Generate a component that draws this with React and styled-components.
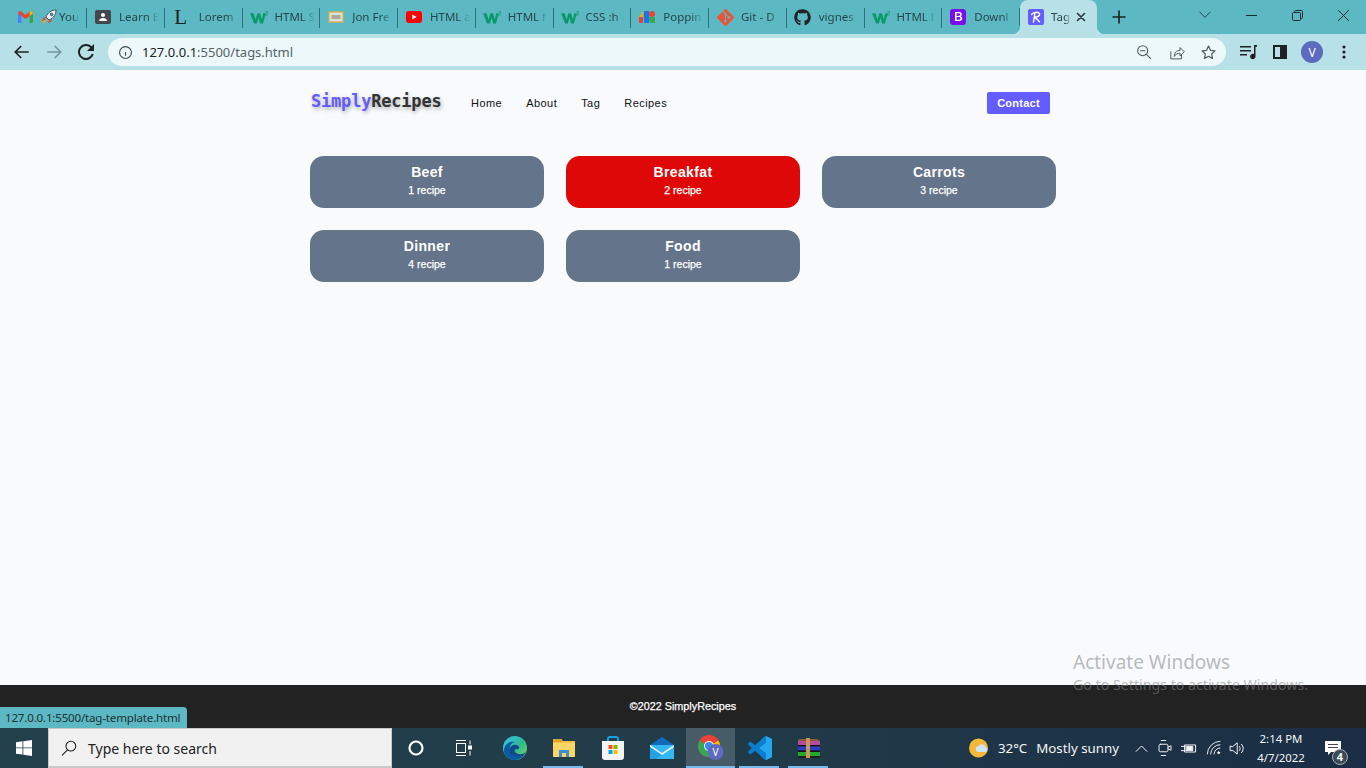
import React from 'react';
import styled, { createGlobalStyle } from 'styled-components';
import { FaGithub } from 'react-icons/fa';

const GlobalStyle = createGlobalStyle`
  html, body { margin: 0; padding: 0; height: 100%; overflow: hidden; }
  * { box-sizing: border-box; }
  body { font-family: "Liberation Sans", Arial, sans-serif; }
`;

const UI_FONT = `"Noto Sans", "Open Sans", sans-serif`;

const Screen = styled.div`
  position: relative;
  width: 1366px;
  height: 768px;
  display: flex;
  flex-direction: column;
  overflow: hidden;
  background: #f8fafc;
`;

/* ---------- browser chrome ---------- */
const TabStrip = styled.div`
  height: 34px;
  flex: none;
  display: flex;
  align-items: stretch;
  background: #5cb8c2;
  padding-left: 9px;
  font-family: ${UI_FONT};
`;
const Tab = styled.div`
  width: ${p => p.$w || 77.75}px;
  flex: none;
  display: flex;
  align-items: center;
  padding-left: ${p => p.$pad ?? 8}px;
  position: relative;
  &::after {
    content: '';
    display: ${p => (p.$noSep ? 'none' : 'block')};
    position: absolute;
    right: 0;
    top: 8px;
    bottom: 6px;
    width: 1px;
    background: #2f6f77;
  }
`;
const ActiveTab = styled.div`
  width: 77px;
  flex: none;
  display: flex;
  align-items: center;
  padding-left: 8px;
  position: relative;
  background: #b7e1e6;
  border-radius: 8px 8px 0 0;
  &::before, &::after {
    content: '';
    position: absolute;
    bottom: 0;
    width: 8px;
    height: 8px;
  }
  &::before { left: -8px; background: radial-gradient(circle at 0 0, #5cb8c2 8px, #b7e1e6 8.5px); }
  &::after { right: -8px; background: radial-gradient(circle at 100% 0, #5cb8c2 8px, #b7e1e6 8.5px); }
`;
const TabIcon = styled.span`
  width: 16px;
  height: 16px;
  flex: none;
  display: flex;
  align-items: center;
  justify-content: center;
  margin-right: ${p => p.$gap ?? 8}px;
  svg { display: block; flex: none; }
`;
const TabTitle = styled.span`
  font-size: 11.5px;
  line-height: 16px;
  color: #27474c;
  white-space: nowrap;
  overflow: hidden;
  width: ${p => p.$w || 40}px;
  -webkit-mask-image: linear-gradient(90deg, #000 70%, transparent);
  mask-image: linear-gradient(90deg, #000 70%, transparent);
`;
const TabClose = styled.span`
  display: flex;
  margin-left: 3px;
  color: #26383b;
`;
const SerifL = styled.span`
  font-family: "Liberation Serif", serif;
  font-size: 21px;
  line-height: 16px;
  color: #222;
`;
const WindowControls = styled.div`
  margin-left: auto;
  display: flex;
  align-items: center;
  color: #1d2b2e;
`;
const NewTab = styled.div`
  width: 28px;
  display: flex;
  align-items: center;
  justify-content: center;
  margin-left: 8px;
  color: #1b2527;
`;
const WinButton = styled.div`
  width: 46px;
  height: 34px;
  display: flex;
  align-items: center;
  justify-content: center;
  position: relative;
  top: -2px;
`;

const Toolbar = styled.div`
  height: 36px;
  flex: none;
  display: flex;
  align-items: center;
  background: #b7e1e6;
  padding: 0 6px;
`;
const NavButton = styled.button`
  width: 32px;
  height: 32px;
  flex: none;
  border: 0;
  padding: 0;
  background: none;
  display: flex;
  align-items: center;
  justify-content: center;
  color: ${p => (p.$muted ? '#75969b' : '#202124')};
`;
const IconAction = styled.span`
  width: 32px;
  height: 32px;
  flex: none;
  display: flex;
  align-items: center;
  justify-content: center;
`;
const AddressBar = styled.div`
  flex: 1;
  height: 28px;
  margin: 0 6px;
  border-radius: 14px;
  background: #ecf8f9;
  display: flex;
  align-items: center;
  padding: 0 2px 0 10px;
  font-family: ${UI_FONT};
`;
const InfoIcon = styled.span`
  display: flex;
  color: #3f4a4d;
`;
const Url = styled.span`
  font-size: 13px;
  margin-left: 9px;
`;
const UrlHost = styled.span`
  color: #202124;
`;
const UrlPath = styled.span`
  color: #556468;
`;
const AddressActions = styled.div`
  margin-left: auto;
  display: flex;
  color: #4d5a5d;
`;
const Avatar = styled.span`
  width: 22px;
  height: 22px;
  border-radius: 50%;
  background: #5c6bc0;
  color: #fff;
  font: 12px ${UI_FONT};
  display: flex;
  align-items: center;
  justify-content: center;
`;

/* ---------- page ---------- */
const Main = styled.main`
  flex: 1;
  background: #f8fafc;
  display: flex;
  flex-direction: column;
  align-items: center;
`;
const Container = styled.div`
  width: 746px;
`;
const Navbar = styled.nav`
  height: 66px;
  display: flex;
  align-items: center;
  padding: 0 6px 0 1px;
`;
const Brand = styled.div`
  font-family: "DejaVu Sans Mono", "Liberation Mono", monospace;
  font-weight: 700;
  font-size: 17px;
  line-height: 20px;
  letter-spacing: -0.2px;
  color: #333;
  text-shadow: 1px 2px 4px rgba(0, 0, 0, 0.33);
  width: 160px;
  margin-bottom: 4px;
`;
const BrandAccent = styled.span`
  color: #645cff;
`;
const NavLinks = styled.div`
  display: flex;
  gap: 24px;
`;
const NavLink = styled.a`
  font-size: 11px;
  letter-spacing: 0.45px;
  color: #111;
`;
const ContactButton = styled.button`
  margin-left: auto;
  width: 63px;
  height: 22px;
  border: 0;
  padding: 0;
  border-radius: 2px;
  background: #645cff;
  color: #fff;
  font: 700 11px "Liberation Sans", Arial, sans-serif;
  letter-spacing: 0.25px;
`;
const TagGrid = styled.div`
  margin-top: 20px;
  display: grid;
  grid-template-columns: repeat(3, 234px);
  grid-auto-rows: 52px;
  gap: 22px;
`;
const TagCard = styled.a`
  border-radius: 14px;
  background: ${p => (p.$active ? '#df0808' : '#64748b')};
  color: #fff;
  text-align: center;
  padding-top: 7px;
`;
const TagName = styled.div`
  font-size: 14px;
  line-height: 18px;
  font-weight: 700;
  letter-spacing: 0.35px;
`;
const TagCount = styled.div`
  font-size: 10.5px;
  line-height: 18px;
  font-weight: 400;
  -webkit-text-stroke: 0.25px #fff;
`;
const Footer = styled.footer`
  height: 43px;
  flex: none;
  background: #222;
  color: #fff;
  display: flex;
  align-items: center;
  justify-content: center;
  font-size: 10.8px;
  -webkit-text-stroke: 0.25px #fff;
  padding-bottom: 1px;
`;

/* ---------- overlays ---------- */
const StatusBubble = styled.div`
  position: absolute;
  left: 0;
  bottom: 40px;
  width: 187px;
  height: 21px;
  background: #5cb8c2;
  border-top-right-radius: 4px;
  color: #1e3236;
  font: 11.6px/21px ${UI_FONT};
  letter-spacing: -0.2px;
  padding-left: 5px;
  white-space: nowrap;
`;
const Watermark = styled.div`
  position: absolute;
  left: 1073px;
  top: 649px;
  color: rgba(130, 130, 130, 0.55);
  font-family: ${UI_FONT};
  pointer-events: none;
`;
const WatermarkTitle = styled.div`
  font-size: 19px;
  line-height: 26px;
`;
const WatermarkSub = styled.div`
  font-size: 14.2px;
  line-height: 19px;
  white-space: nowrap;
`;

/* ---------- taskbar ---------- */
const Taskbar = styled.div`
  height: 40px;
  flex: none;
  display: flex;
  align-items: stretch;
  background: linear-gradient(90deg, #21404b 0%, #223c49 50%, #1a2d45 100%);
  color: #fff;
  font-family: ${UI_FONT};
`;
const StartButton = styled.div`
  width: 48px;
  flex: none;
  display: flex;
  align-items: center;
  justify-content: center;
`;
const SearchBox = styled.div`
  width: 344px;
  flex: none;
  display: flex;
  align-items: center;
  background: #f1f1f1;
  border: 1px solid #c9c9c9;
  border-bottom-width: 2px;
  padding-left: 11px;
  color: #222;
  font-size: 14px;
`;
const SearchText = styled.span`
  margin-left: 10px;
  padding-top: 1px;
`;
const TaskSlot = styled.div`
  width: ${p => p.$w || 49}px;
  flex: none;
  margin-left: ${p => p.$ml || 0}px;
  display: flex;
  align-items: center;
  justify-content: center;
  position: relative;
  background: ${p => (p.$active ? 'rgba(255,255,255,0.17)' : 'transparent')};
  &::after {
    content: '';
    display: ${p => (p.$open ? 'block' : 'none')};
    position: absolute;
    left: ${p => (p.$active ? 0 : 4)}px;
    right: ${p => (p.$active ? 0 : 5)}px;
    bottom: 0;
    height: 2px;
    background: #76b9ed;
  }
`;
const Tray = styled.div`
  margin-left: auto;
  display: flex;
  align-items: center;
  font-size: 13.3px;
  color: #f4f6f7;
`;
const TrayText = styled.span`
  margin-left: ${p => p.$ml || 0}px;
  white-space: nowrap;
`;
const TrayIcon = styled.span`
  width: 22px;
  display: flex;
  justify-content: center;
  margin-left: ${p => p.$ml || 0}px;
`;
const Clock = styled.div`
  width: 64px;
  margin-left: 2px;
  text-align: center;
  font-size: 11.4px;
  line-height: 19px;
`;
const NotifyButton = styled.div`
  position: relative;
  width: 30px;
  margin-left: 5px;
  margin-right: 18px;
  display: flex;
  justify-content: center;
`;
const NotifyBadge = styled.span`
  position: absolute;
  left: 14px;
  top: 8px;
  width: 16px;
  height: 16px;
  border-radius: 50%;
  border: 1px solid #aaa;
  background: #3a4a56;
  font-size: 11px;
  font-weight: 700;
  line-height: 14px;
  text-align: center;
`;

/* ---------- drawn icons ---------- */
const Stroke = ({ s = 16, w = 2, children, vb = 24 }) => (
  <svg width={s} height={s} viewBox={`0 0 ${vb} ${vb}`} fill="none" stroke="currentColor" strokeWidth={w} strokeLinecap="round" strokeLinejoin="round">{children}</svg>
);

const Gmail = () => (
  <svg width="15" height="12" viewBox="0 0 15 12">
    <path d="M0 2v9a1 1 0 0 0 1 1h2.4V5z" fill="#4285f4" />
    <path d="M15 2v9a1 1 0 0 1-1 1h-2.4V5z" fill="#34a853" />
    <path d="M0 2.2C0 .6 1.7-.4 3 .5l4.5 3.4L12 .5c1.3-.9 3 .1 3 1.7L11.6 5 7.5 8 3.4 5z" fill="#ea4335" />
    <path d="M11.6 1 12 .5c1.3-.9 3 .1 3 1.7L11.6 5z" fill="#fbbc04" />
  </svg>
);
const Rocket = () => (
  <svg width="16" height="16" viewBox="0 0 16 16">
    <path d="M5 8 2 9l-1 3 3-1z" fill="#d9502c" />
    <path d="M8 11l-1 3 3-1 1-3z" fill="#d9502c" />
    <path d="M5 8C7 3 11 1 15 1c0 4-2 8-7 10z" fill="#eef1f3" stroke="#33383c" strokeWidth=".8" />
    <circle cx="10.6" cy="5.4" r="1.4" fill="#4a90c8" stroke="#33383c" strokeWidth=".6" />
    <path d="M2 14l3-3" stroke="#f2a33a" strokeWidth="2" />
  </svg>
);
const Classroom = () => (
  <svg width="16" height="16" viewBox="0 0 16 16">
    <rect width="16" height="14" y="1" rx="2" fill="#44474c" />
    <circle cx="8" cy="6" r="2" fill="#fff" />
    <path d="M4 12c0-2 2-3 4-3s4 1 4 3z" fill="#fff" />
  </svg>
);
const W3 = () => (
  <svg width="18" height="13" viewBox="0 0 17 12">
    <path d="M0 2h3.4l1.8 6 1.8-6h2.4l1.8 6 1.3-6H15l-2.8 9.6H9.6L8.1 6.2 6.5 11.6H3.9z" fill="#0a9a6a" />
    <path d="M14.2 0h2.3v.8l-.9 1c.6.1 1 .4 1 1 0 .7-.6 1.1-1.3 1.1-.5 0-.9-.1-1.2-.3" fill="none" stroke="#0a9a6a" strokeWidth=".7" />
  </svg>
);
const CssBox = () => (
  <svg width="16" height="12" viewBox="0 0 16 12">
    <rect width="16" height="12" fill="#b5ae6c" />
    <rect x="1.5" y="1.5" width="13" height="9" fill="#e3e0c8" />
    <rect x="3.5" y="4" width="9" height="4" fill="#a9a9a0" />
  </svg>
);
const Youtube = () => (
  <svg width="16" height="12" viewBox="0 0 16 12">
    <rect width="16" height="12" rx="3" fill="#f00" />
    <path d="M6.3 3.4v5.2L10.6 6z" fill="#fff" />
  </svg>
);
const GoogleFonts = () => (
  <svg width="16" height="14" viewBox="0 0 16 14">
    <path d="M0 7 4 1v6z" fill="#f9ab00" />
    <rect x="0" y="7" width="4" height="6" fill="#ea4335" />
    <rect x="5" y="1" width="5" height="12" fill="#1a73e8" />
    <circle cx="13" cy="4" r="3" fill="#ea4335" />
    <path d="M10 7h6v6h-3a3 3 0 0 1-3-3z" fill="#34a853" />
  </svg>
);
const GitLogo = () => (
  <svg width="17" height="17" viewBox="0 0 16 16">
    <path d="M15.7 7.3 8.7.3a1 1 0 0 0-1.4 0L5.8 1.8l1.8 1.8a1.2 1.2 0 0 1 1.5 1.5l1.8 1.8a1.2 1.2 0 1 1-.7.7L8.5 5.9v4.4a1.2 1.2 0 1 1-1-.1V5.8a1.2 1.2 0 0 1-.6-1.5L5.1 2.5.3 7.3a1 1 0 0 0 0 1.4l7 7a1 1 0 0 0 1.4 0l7-7a1 1 0 0 0 0-1.4z" fill="#f05133" />
  </svg>
);
const Bootstrap = () => (
  <svg width="16" height="16" viewBox="0 0 16 16">
    <rect width="16" height="16" rx="3" fill="#7a0ee8" />
    <path fillRule="evenodd" d="M5 3h4c1.8 0 2.8.9 2.8 2.2 0 1-.6 1.7-1.4 2 1.1.2 1.9 1 1.9 2.3 0 1.6-1.2 2.5-3.1 2.5H5zm1.6 1.3v2.6H8.4c1.1 0 1.7-.5 1.7-1.3s-.6-1.3-1.5-1.3zm0 3.8v2.7h2.1c1.1 0 1.7-.5 1.7-1.4s-.6-1.3-1.8-1.3z" fill="#fff" />
  </svg>
);
const RecipeLogo = () => (
  <svg width="16" height="16" viewBox="0 0 16 16">
    <rect width="16" height="16" rx="2" fill="#645cff" />
    <path d="M5.5 13 7 3.5M3.6 5.4C5 3 12 2.4 11.6 5.4 11.3 7.6 8 8.2 6.3 8.2c2 .6 3.4 2.8 5.2 4.6" fill="none" stroke="#fff" strokeWidth="1.5" strokeLinecap="round" />
  </svg>
);

const WindowsLogo = () => (
  <svg width="16" height="16" viewBox="0 0 16 16" fill="#fff">
    <path d="M0 2.3 6.5 1.3v6.2H0zM7.3 1.2 16 0v7.5H7.3zM0 8.3h6.5v6.3L0 13.7zM7.3 8.3H16V16l-8.7-1.2z" />
  </svg>
);
const Edge = () => (
  <svg width="24" height="24" viewBox="0 0 24 24">
    <defs>
      <linearGradient id="edgeA" x1="0" y1="0" x2="1" y2="1"><stop offset="0" stopColor="#35c1f1" /><stop offset=".55" stopColor="#2fb98d" /><stop offset="1" stopColor="#7fe05a" /></linearGradient>
    </defs>
    <circle cx="12" cy="12" r="12" fill="url(#edgeA)" />
    <path d="M1 15C1 8 7 5 12 6c-4 1-6 4-5 8 1 5 7 7 11 5 2-1 4-2 5-4-1 5-6 9-11 9S1 20 1 15z" fill="#0c59a4" />
    <path d="M6.5 14.5c0-4 3.5-6.5 7-5.5 3 .8 3.5 3.5 1.5 4-1.2.3-2.3.1-3 .6-1 .8-.2 2.9 2 3.900 3 1.3 6 .6 8-.5-2 2.5-5 4-8 3.5-4-.6-7.5-3-7.5-6z" fill="#114a8b" />
  </svg>
);
const Explorer = () => (
  <svg width="22" height="20" viewBox="0 0 22 20">
    <path d="M0 1h8l2 2h12v15a1 1 0 0 1-1 1H1a1 1 0 0 1-1-1z" fill="#f5c344" />
    <rect y="1" width="9" height="3" fill="#e0a526" />
    <path d="M0 5h22v13a1 1 0 0 1-1 1H1a1 1 0 0 1-1-1z" fill="#fbd566" />
    <path d="M6 19v-7h10v7h-3v-4H9v4z" fill="#3d8fd1" />
  </svg>
);
const Store = () => (
  <svg width="24" height="24" viewBox="0 0 24 24">
    <path d="M7 6V3a2 2 0 0 1 2-2h6a2 2 0 0 1 2 2v3" fill="none" stroke="#18a0e0" strokeWidth="2" />
    <path d="M1 5h22v16a3 3 0 0 1-3 3H4a3 3 0 0 1-3-3z" fill="#f4f4f4" />
    <rect x="7.5" y="9" width="4" height="4" fill="#f25022" />
    <rect x="12.5" y="9" width="4" height="4" fill="#7fba00" />
    <rect x="7.5" y="14" width="4" height="4" fill="#00a4ef" />
    <rect x="12.5" y="14" width="4" height="4" fill="#ffb900" />
  </svg>
);
const Mail = () => (
  <svg width="24" height="22" viewBox="0 0 24 22">
    <path d="M0 8 12 0l12 8-12 8z" fill="#0f6cbd" />
    <rect y="8" width="24" height="14" fill="#35b8f1" />
    <path d="M0 8l12 8 12-8v2L12 18 0 10z" fill="#e8f6fd" />
    <path d="M0 22V10l12 8-6 4z" fill="#1c97dc" opacity=".7" />
  </svg>
);
const Chrome = () => (
  <svg width="26" height="26" viewBox="0 0 26 26">
    <circle cx="11" cy="11" r="11" fill="#ea4335" />
    <path d="M11 11 1.5 5.500A11 11 0 0 0 11 22z" fill="#34a853" />
    <path d="M11 11 20.5 5.500A11 11 0 0 1 11 22z" fill="#fbbc04" />
    <circle cx="11" cy="11" r="5" fill="#fff" />
    <circle cx="11" cy="11" r="4" fill="#4285f4" />
    <circle cx="17.5" cy="17" r="8" fill="#5c6bc0" />
    <text x="17.5" y="20.5" fontSize="10" fill="#fff" textAnchor="middle" fontFamily="Noto Sans">V</text>
  </svg>
);
const VSCode = () => (
  <svg width="24" height="24" viewBox="0 0 24 24">
    <path fill="#0a7fd0" d="M23.15 2.587L18.21.21a1.494 1.494 0 0 0-1.705.29l-9.46 8.63-4.12-3.128a.999.999 0 0 0-1.276.057L.327 7.261A1 1 0 0 0 .326 8.74L3.899 12 .326 15.26a1 1 0 0 0 .001 1.479L1.65 17.94a.999.999 0 0 0 1.276.057l4.12-3.128 9.46 8.63a1.492 1.492 0 0 0 1.704.29l4.942-2.377A1.5 1.5 0 0 0 24 20.06V3.939a1.5 1.5 0 0 0-.85-1.352zm-5.146 14.861L10.826 12l7.178-5.448v10.896z" />
    <path fill="#22a7f0" d="M18 0v6.55L10.826 12 18 17.45V24l.21-.1 4.94-2.38A1.5 1.5 0 0 0 24 20.06V3.94a1.5 1.5 0 0 0-.85-1.35L18.21.21z" />
  </svg>
);
const WinRar = () => (
  <svg width="24" height="20" viewBox="0 0 24 20">
    <path d="M2 1h18l3 2v4H1V3z" fill="#8a5a3a" />
    <rect x="1" y="3" width="22" height="4" fill="#b84a9a" />
    <rect x="1" y="7" width="22" height="1.5" fill="#111" />
    <rect x="1" y="8.5" width="22" height="4" fill="#2c3cc4" />
    <rect x="1" y="12.5" width="22" height="1.5" fill="#111" />
    <rect x="1" y="14" width="22" height="4" fill="#22a82c" />
    <rect x="1" y="18" width="22" height="2" fill="#222" />
    <rect x="9" y="0" width="4" height="20" fill="#c89a5a" />
  </svg>
);
const Weather = () => (
  <svg width="20" height="20" viewBox="0 0 20 20">
    <circle cx="9.5" cy="10" r="9.5" fill="#f6b83a" />
    <path d="M9 14a3 3 0 0 1 .4-5.9 4 4 0 0 1 7.3 1.1A2.5 2.5 0 0 1 16.5 14z" fill="#cfe6f7" />
  </svg>
);

const tabs = [
  { icon: <Rocket />, title: 'You', w: 54, gap: 2, tw: 20 },
  { icon: <Classroom />, title: 'Learn B' },
  { icon: <SerifL>L</SerifL>, title: 'Lorem', gap: 10 },
  { icon: <W3 />, title: 'HTML S' },
  { icon: <CssBox />, title: 'Jon Fre' },
  { icon: <Youtube />, title: 'HTML a' },
  { icon: <W3 />, title: 'HTML f' },
  { icon: <W3 />, title: 'CSS :h' },
  { icon: <GoogleFonts />, title: 'Poppin' },
  { icon: <GitLogo />, title: 'Git - D' },
  { icon: <FaGithub size={17} color="#222" />, title: 'vignes' },
  { icon: <W3 />, title: 'HTML l' },
  { icon: <Bootstrap />, title: 'Downl' },
];

const tags = [
  { name: 'Beef', count: 1 },
  { name: 'Breakfat', count: 2, active: true },
  { name: 'Carrots', count: 3 },
  { name: 'Dinner', count: 4 },
  { name: 'Food', count: 1 },
];

export default function App() {
  return (
    <Screen>
      <GlobalStyle />
      <TabStrip>
        <Tab $w={24} $noSep $pad={8}><TabIcon $gap={0}><Gmail /></TabIcon></Tab>
        {tabs.map((t, i) => (
          <Tab key={i} $w={t.w} $pad={t.pad}>
            <TabIcon $gap={t.gap}>{t.icon}</TabIcon>
            <TabTitle $w={t.tw}>{t.title}</TabTitle>
          </Tab>
        ))}
        <ActiveTab>
          <TabIcon $gap={7}><RecipeLogo /></TabIcon>
          <TabTitle $w={20}>Tag</TabTitle>
          <TabClose>
            <Stroke s={14} w={2.8}><path d="M6 6l12 12M18 6 6 18" /></Stroke>
          </TabClose>
        </ActiveTab>
        <NewTab><Stroke s={18} w={2.2}><path d="M12 4v16M4 12h16" /></Stroke></NewTab>
        <WindowControls>
          <WinButton><Stroke s={14} w={1.4}><path d="M3 7l9 9 9-9" /></Stroke></WinButton>
          <WinButton>
            <svg width="11" height="11" viewBox="0 0 11 11"><path d="M0 5.5h11" stroke="currentColor" /></svg>
          </WinButton>
          <WinButton>
            <svg width="11" height="11" viewBox="0 0 11 11" fill="none" stroke="currentColor"><rect x=".5" y="2.5" width="8" height="8" rx="1" /><path d="M2.5 2.5V1.500a1 1 0 0 1 1-1h6a1 1 0 0 1 1 1v6a1 1 0 0 1-1 1h-1" /></svg>
          </WinButton>
          <WinButton>
            <svg width="11" height="11" viewBox="0 0 11 11"><path d="M0 0l11 11M11 0 0 11" stroke="currentColor" /></svg>
          </WinButton>
        </WindowControls>
      </TabStrip>

      <Toolbar>
        <NavButton aria-label="Back"><Stroke s={18} w={2.2}><path d="M21 12H3M11 4l-8 8 8 8" strokeLinecap="butt" strokeLinejoin="miter" /></Stroke></NavButton>
        <NavButton $muted aria-label="Forward"><Stroke s={18} w={2.2}><path d="M3 12h18M13 4l8 8-8 8" strokeLinecap="butt" strokeLinejoin="miter" /></Stroke></NavButton>
        <NavButton aria-label="Reload">
          <svg width="16" height="16" viewBox="0 0 16 16" fill="currentColor"><path d="M13.65 2.35A8 8 0 1 0 15.75 10h-2.1a6 6 0 1 1-1.42-6.230L9 7h7V0z" /></svg>
        </NavButton>
        <AddressBar>
          <InfoIcon><Stroke s={15} w={1.8}><circle cx="12" cy="12" r="9.5" /><path d="M12 11v6M12 7.5v.2" strokeLinecap="butt" /></Stroke></InfoIcon>
          <Url><UrlHost>127.0.0.1</UrlHost><UrlPath>:5500/tags.html</UrlPath></Url>
          <AddressActions>
            <IconAction><Stroke s={16} w={1.6}><circle cx="10" cy="10" r="7.5" /><path d="M6.5 10h7M16 16l6 6" /></Stroke></IconAction>
            <IconAction><Stroke s={17} w={1.4}><path d="M4 11v10h15v-5" /><path d="M9 17c0-5 3-8 8-8V5l6 6-6 6v-4c-3 0-6 1-8 4z" /></Stroke></IconAction>
            <IconAction><Stroke s={17} w={1.7}><path d="M12 3l2.8 5.9 6.4.8-4.7 4.4 1.2 6.4L12 17.4 6.3 20.5l1.2-6.4L2.8 9.7l6.4-.8z" /></Stroke></IconAction>
          </AddressActions>
        </AddressBar>
        <NavButton aria-label="Media">
          <svg width="17" height="15" viewBox="0 0 17 15" fill="currentColor"><path d="M0 1h11v1.6H0zM0 5h11v1.6H0zM0 9h7v1.6H0zM14 0h3v1.8h-1.5V11.500a2.700 2.700 0 1 1-1.500-2.400z" /></svg>
        </NavButton>
        <NavButton aria-label="Side panel">
          <svg width="14" height="14" viewBox="0 0 14 14"><rect x="1" y="1" width="12" height="12" fill="none" stroke="currentColor" strokeWidth="2" /><rect x="7" y="1" width="6" height="12" fill="currentColor" /></svg>
        </NavButton>
        <NavButton aria-label="Profile"><Avatar>V</Avatar></NavButton>
        <NavButton aria-label="Menu">
          <svg width="4" height="14" viewBox="0 0 4 14" fill="currentColor"><circle cx="2" cy="2" r="1.6" /><circle cx="2" cy="7" r="1.6" /><circle cx="2" cy="12" r="1.6" /></svg>
        </NavButton>
      </Toolbar>

      <Main>
        <Container>
          <Navbar>
            <Brand><BrandAccent>Simply</BrandAccent>Recipes</Brand>
            <NavLinks>
              <NavLink>Home</NavLink>
              <NavLink>About</NavLink>
              <NavLink>Tag</NavLink>
              <NavLink>Recipes</NavLink>
            </NavLinks>
            <ContactButton>Contact</ContactButton>
          </Navbar>
          <TagGrid>
            {tags.map(t => (
              <TagCard key={t.name} $active={t.active}>
                <TagName>{t.name}</TagName>
                <TagCount>{t.count} recipe</TagCount>
              </TagCard>
            ))}
          </TagGrid>
        </Container>
      </Main>

      <Footer>©2022 SimplyRecipes</Footer>

      <Taskbar>
        <StartButton><WindowsLogo /></StartButton>
        <SearchBox>
          <Stroke s={18} w={1.5}><circle cx="14.5" cy="9.5" r="6.5" /><path d="M10 14.5 3 21.5" /></Stroke>
          <SearchText>Type here to search</SearchText>
        </SearchBox>
        <TaskSlot $w={48}>
          <svg width="16" height="16" viewBox="0 0 16 16"><circle cx="8" cy="8" r="6.5" fill="none" stroke="#fff" strokeWidth="2.2" /></svg>
        </TaskSlot>
        <TaskSlot $w={48}>
          <svg width="18" height="16" viewBox="0 0 18 16" fill="none" stroke="#fff"><path d="M1 .5h10M1 15.5h10" /><rect x="1.5" y="3.5" width="9" height="9" /><path d="M15 .5v4M15 11v4.5" /><rect x="13.5" y="6" width="3" height="3" fill="#fff" /></svg>
        </TaskSlot>
        <TaskSlot $ml={2}><Edge /></TaskSlot>
        <TaskSlot $open><Explorer /></TaskSlot>
        <TaskSlot><Store /></TaskSlot>
        <TaskSlot><Mail /></TaskSlot>
        <TaskSlot $active $open><Chrome /></TaskSlot>
        <TaskSlot $open><VSCode /></TaskSlot>
        <TaskSlot $open><WinRar /></TaskSlot>
        <Tray>
          <Weather />
          <TrayText $ml={9}>32°C</TrayText>
          <TrayText $ml={9}>Mostly sunny</TrayText>
          <TrayIcon $ml={11}><Stroke s={15} w={1.6}><path d="M3 17l9-9 9 9" strokeLinecap="butt" /></Stroke></TrayIcon>
          <TrayIcon $ml={2}><Stroke s={18} w={1.3}><rect x="4" y="7" width="12" height="10" rx="2" /><path d="M16 11l4-2v6l-4-2M7 2h6M7 22h6" /></Stroke></TrayIcon>
          <TrayIcon $ml={1}><Stroke s={17} w={1.4}><rect x="7" y="7" width="15" height="10" /><path d="M2 9h5M2 15h5" /><rect x="9" y="9" width="9" height="6" fill="currentColor" /></Stroke></TrayIcon>
          <TrayIcon $ml={4}><Stroke s={16} w={1.4}><path d="M2 21A19 19 0 0 1 21 2M7 21A14 14 0 0 1 21 7M12 21a9 9 0 0 1 9-9" /><circle cx="19" cy="19" r="1.5" fill="currentColor" /></Stroke></TrayIcon>
          <TrayIcon><Stroke s={17} w={1.4}><path d="M3 9v6h4l6 5V4L7 9zM16 9a4 4 0 0 1 0 6M19 6a8 8 0 0 1 0 12" /></Stroke></TrayIcon>
          <Clock>2:14 PM<br />4/7/2022</Clock>
          <NotifyButton>
            <svg width="16" height="15" viewBox="0 0 16 15"><path d="M0 0h16v11H6l-3 3v-3H0z" fill="#fff" /><path d="M3 3.5h10M3 6.5h10" stroke="#445" /></svg>
            <NotifyBadge>4</NotifyBadge>
          </NotifyButton>
        </Tray>
      </Taskbar>

      <StatusBubble>127.0.0.1:5500/tag-template.html</StatusBubble>
      <Watermark>
        <WatermarkTitle>Activate Windows</WatermarkTitle>
        <WatermarkSub>Go to Settings to activate Windows.</WatermarkSub>
      </Watermark>
    </Screen>
  );
}
